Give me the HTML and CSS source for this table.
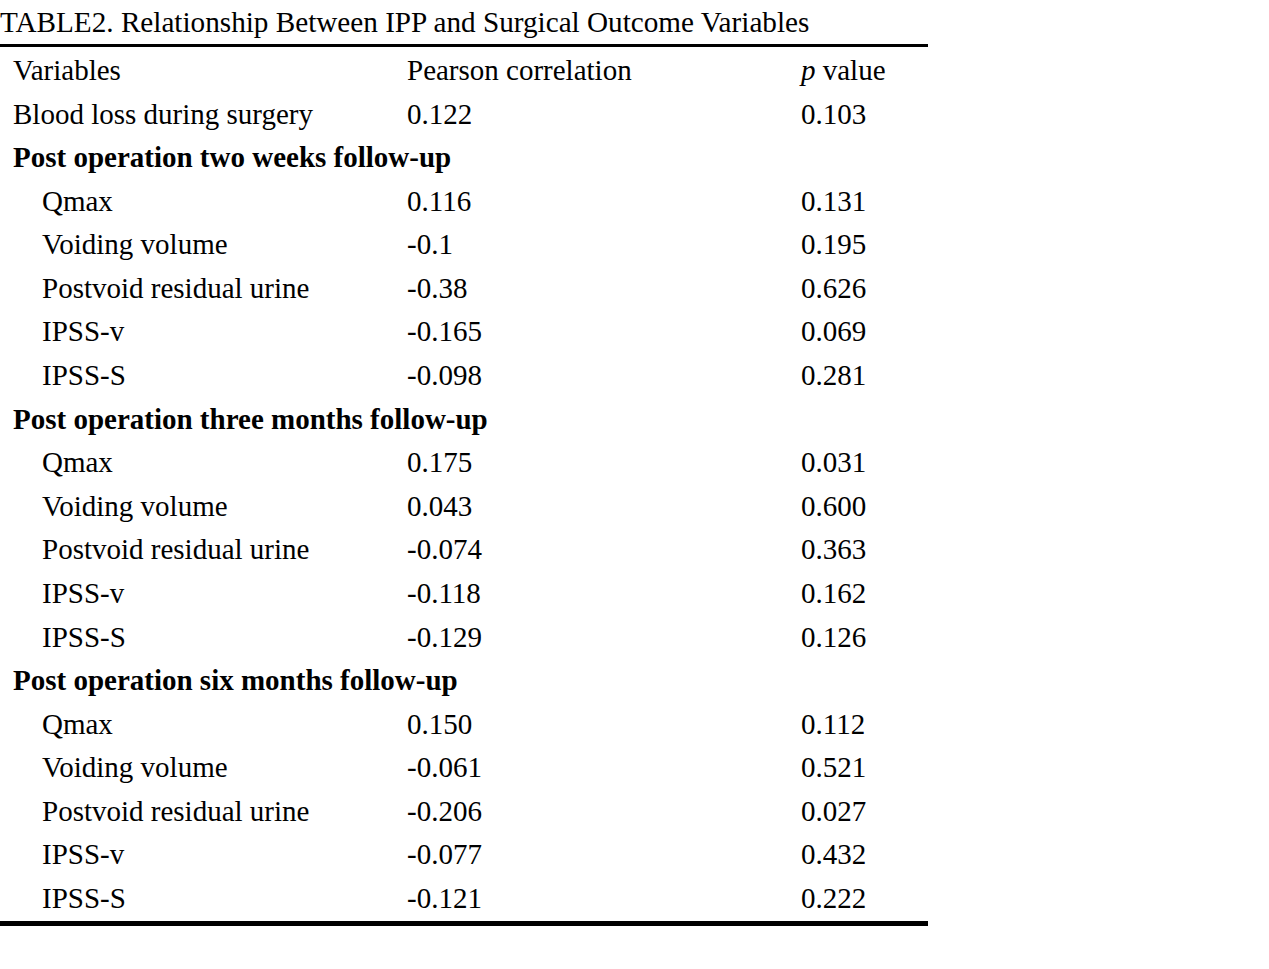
FILE: index.html
```html
<!DOCTYPE html>
<html>
<head>
<meta charset="utf-8">
<link rel="stylesheet" href="styles.css">
</head>
<body>
<div class="wrap">
  <div class="title">TABLE2. Relationship Between IPP and Surgical Outcome Variables</div>
  <div class="table">
    <div class="row"><span class="c1">Variables</span><span class="c2">Pearson correlation</span><span class="c3"><i>p</i> value</span></div>
    <div class="row"><span class="c1">Blood loss during surgery</span><span class="c2">0.122</span><span class="c3">0.103</span></div>
    <div class="row sec"><span class="c1">Post operation two weeks follow-up</span></div>
    <div class="row sub"><span class="c1">Qmax</span><span class="c2">0.116</span><span class="c3">0.131</span></div>
    <div class="row sub"><span class="c1">Voiding volume</span><span class="c2">-0.1</span><span class="c3">0.195</span></div>
    <div class="row sub"><span class="c1">Postvoid residual urine</span><span class="c2">-0.38</span><span class="c3">0.626</span></div>
    <div class="row sub"><span class="c1">IPSS-v</span><span class="c2">-0.165</span><span class="c3">0.069</span></div>
    <div class="row sub"><span class="c1">IPSS-S</span><span class="c2">-0.098</span><span class="c3">0.281</span></div>
    <div class="row sec"><span class="c1">Post operation three months follow-up</span></div>
    <div class="row sub"><span class="c1">Qmax</span><span class="c2">0.175</span><span class="c3">0.031</span></div>
    <div class="row sub"><span class="c1">Voiding volume</span><span class="c2">0.043</span><span class="c3">0.600</span></div>
    <div class="row sub"><span class="c1">Postvoid residual urine</span><span class="c2">-0.074</span><span class="c3">0.363</span></div>
    <div class="row sub"><span class="c1">IPSS-v</span><span class="c2">-0.118</span><span class="c3">0.162</span></div>
    <div class="row sub"><span class="c1">IPSS-S</span><span class="c2">-0.129</span><span class="c3">0.126</span></div>
    <div class="row sec"><span class="c1">Post operation six months follow-up</span></div>
    <div class="row sub"><span class="c1">Qmax</span><span class="c2">0.150</span><span class="c3">0.112</span></div>
    <div class="row sub"><span class="c1">Voiding volume</span><span class="c2">-0.061</span><span class="c3">0.521</span></div>
    <div class="row sub"><span class="c1">Postvoid residual urine</span><span class="c2">-0.206</span><span class="c3">0.027</span></div>
    <div class="row sub"><span class="c1">IPSS-v</span><span class="c2">-0.077</span><span class="c3">0.432</span></div>
    <div class="row sub"><span class="c1">IPSS-S</span><span class="c2">-0.121</span><span class="c3">0.222</span></div>
  </div>
</div>
</body>
</html>
```

FILE: styles.css
```css
html, body {
  margin: 0;
  padding: 0;
  background: #fff;
}
body {
  font-family: "Liberation Serif", "Times New Roman", serif;
  color: #000;
  font-size: 29px;
}
.wrap {
  width: 928px;
}
.title {
  height: 44px;
  line-height: 44px;
  font-size: 29.2px;
  white-space: nowrap;
}
.table {
  border-top: 3px solid #000;
  border-bottom: 5px solid #000;
  padding-top: 2px;
}
.row {
  display: grid;
  grid-template-columns: 394px 394px 1fr;
  height: 43.58px;
  line-height: 43.58px;
  padding-left: 13px;
  white-space: nowrap;
}
.sec .c1 {
  font-weight: bold;
  grid-column: 1 / 4;
}
.sub .c1 {
  padding-left: 29px;
}
```
